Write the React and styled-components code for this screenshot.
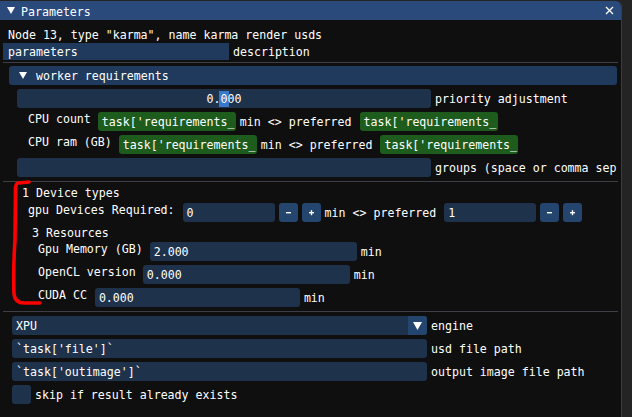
import React from "react";
import styled, { createGlobalStyle } from "styled-components";

// --- Global ---
const GlobalStyle = createGlobalStyle`
  html, body {
    margin: 0;
    padding: 0;
    background: #242424;
  }
  body {
    font-family: "DejaVu Sans Mono", "Liberation Mono", monospace;
    font-size: 11.6px;
    color: #ffffff;
  }
`;

// --- Window chrome ---
const Screen = styled.div`
  width: 632px;
  height: 417px;
  overflow: hidden;
  background: #242424;
  padding-top: 1px;
  box-sizing: border-box;
`;

const Window = styled.div`
  position: relative;
  width: 621px;
  height: 416px;
  background: #0f0f0f;
  border-right: 1px solid #3b3b44;
  border-top-right-radius: 5px;
  overflow: hidden;
  display: flex;
  flex-direction: column;
`;

const TitleBar = styled.div`
  height: 19px;
  flex: none;
  background: #294a7a;
  display: flex;
  align-items: center;
  padding: 0 7px;
  border-top-right-radius: 5px;
`;

const TitleText = styled.span`
  margin-left: 6px;
  line-height: 17px;
  height: 13px;
  flex: 1;
`;

const Body = styled.div`
  display: flex;
  flex-direction: column;
`;

// --- Widgets ---
// line-height sits 2px over the box height so the glyphs drop 1px, like the bitmap font
const TextLine = styled.div`
  line-height: 15px;
  height: 13px;
  white-space: nowrap;
  margin-left: ${(p) => p.$x}px;
  margin-top: ${(p) => p.$mt ?? 4}px;
`;

const TableHead = styled.div`
  display: flex;
  margin-top: 2px;
  margin-left: 3px;
  height: 17px;
  line-height: 19px;
`;

const HeadCell = styled.div`
  width: 221px;
  height: 17px;
  padding-left: 5px;
  background: #1f3a5c;
`;

const HeadLabel = styled.div`
  margin-left: 4px;
`;

const Separator = styled.div`
  height: 1px;
  width: 615px;
  margin-left: 3px;
  margin-top: ${(p) => p.$mt ?? 4}px;
  background: #3e3e47;
`;

const Header = styled.div`
  margin: 3px 0 0 9px;
  width: 608px;
  height: 19px;
  border-radius: 3px;
  background: #1f3a5c;
  display: flex;
  align-items: center;
  padding-left: 10px;
  box-sizing: border-box;
`;

const HeaderText = styled.span`
  margin-left: 9px;
  line-height: 15px;
  height: 13px;
`;

const Row = styled.div`
  display: flex;
  align-items: flex-start;
  gap: 4px;
  margin-left: ${(p) => p.$x}px;
  margin-top: ${(p) => p.$mt ?? 4}px;
  height: 19px;
  white-space: nowrap;
`;

const SideLabel = styled.div`
  line-height: 15px;
  height: 13px;
  margin-right: ${(p) => p.$mr ?? 3}px;
`;

const InlineLabel = styled.div`
  line-height: 21px;
  height: 19px;
  margin-right: ${(p) => p.$mr ?? 0}px;
`;

const Frame = styled.div`
  flex: none;
  width: ${(p) => p.$w}px;
  height: 19px;
  line-height: 21px;
  box-sizing: border-box;
  padding: 0 4px;
  border-radius: 3px;
  overflow: hidden;
  white-space: nowrap;
  background: ${(p) => (p.$tone === "green" ? "#1d5c1d" : "#1f324c")};
  text-align: ${(p) => (p.$center ? "center" : "left")};
`;

const Selected = styled.span`
  background: #3a78cc;
  display: inline-block;
  line-height: 16px;
  padding: 0 2px;
  margin: 0 -2px;
`;

const SmallButton = styled.div`
  flex: none;
  width: 19px;
  height: 19px;
  border-radius: 3px;
  background: #24456d;
  display: flex;
  align-items: center;
  justify-content: center;
`;

const Combo = styled.div`
  flex: none;
  width: ${(p) => p.$w}px;
  height: 19px;
  border-radius: 3px;
  background: #1f324c;
  display: flex;
  overflow: hidden;
`;

const ComboValue = styled.div`
  flex: 1;
  padding-left: 4px;
  line-height: 21px;
`;

const ComboArrow = styled.div`
  width: 19px;
  height: 19px;
  background: #24456d;
  display: flex;
  align-items: center;
  justify-content: center;
`;

const Checkbox = styled.div`
  width: 19px;
  height: 19px;
  border-radius: 3px;
  background: #1f324c;
`;

const Marker = styled.svg`
  position: absolute;
  left: 0;
  top: -1px;
  pointer-events: none;
`;

// --- Icons ---
const DownArrow = ({ size = 8 }) => (
  <svg width={size} height={size - 1} viewBox="0 0 8 7">
    <polygon points="0,0 8,0 4,7" fill="#ffffff" />
  </svg>
);

const CloseX = () => (
  <svg width="9" height="9" viewBox="0 0 9 9">
    <path d="M1 1 L8 8 M8 1 L1 8" stroke="#ffffff" strokeWidth="1.3" />
  </svg>
);

const Minus = () => (
  <svg width="7" height="7" viewBox="0 0 7 7">
    <rect x="1" y="3" width="5" height="1.4" fill="#fff" />
  </svg>
);

const Plus = () => (
  <svg width="7" height="7" viewBox="0 0 7 7">
    <rect x="1" y="3" width="5" height="1.4" fill="#fff" />
    <rect x="2.8" y="1.2" width="1.4" height="5" fill="#fff" />
  </svg>
);

const TASK_REQ = "task['requirements_";

export default function App() {
  return (
    <Screen>
      <GlobalStyle />
      <Window>
        <TitleBar>
          <DownArrow />
          <TitleText>Parameters</TitleText>
          <CloseX />
        </TitleBar>
        <Body>
          <TextLine $x={8} $mt={8}>
            Node 13, type "karma", name karma render usds
          </TextLine>
          <TableHead>
            <HeadCell>parameters</HeadCell>
            <HeadLabel>description</HeadLabel>
          </TableHead>
          <Separator $mt={2} />

          <Header>
            <DownArrow />
            <HeaderText>worker requirements</HeaderText>
          </Header>
          <Row $x={17}>
            <Frame $w={414} $center>
              0.<Selected>0</Selected>00
            </Frame>
            <InlineLabel>priority adjustment</InlineLabel>
          </Row>
          <Row $x={28}>
            <SideLabel>CPU count</SideLabel>
            <Frame $w={138} $tone="green">{TASK_REQ}</Frame>
            <InlineLabel $mr={4}>min &lt;&gt; preferred</InlineLabel>
            <Frame $w={138} $tone="green">{TASK_REQ}</Frame>
          </Row>
          <Row $x={28}>
            <SideLabel>CPU ram (GB)</SideLabel>
            <Frame $w={138} $tone="green">{TASK_REQ}</Frame>
            <InlineLabel $mr={4}>min &lt;&gt; preferred</InlineLabel>
            <Frame $w={138} $tone="green">{TASK_REQ}</Frame>
          </Row>
          <Row $x={17}>
            <Frame $w={414} />
            <InlineLabel>groups (space or comma sep</InlineLabel>
          </Row>
          <Separator />

          <TextLine $x={22}>1 Device types</TextLine>
          <Row $x={28}>
            <SideLabel $mr={4}>gpu Devices Required:</SideLabel>
            <Frame $w={92}>0</Frame>
            <SmallButton><Minus /></SmallButton>
            <SmallButton><Plus /></SmallButton>
            <InlineLabel $mr={4}>min &lt;&gt; preferred</InlineLabel>
            <Frame $w={92}>1</Frame>
            <SmallButton><Minus /></SmallButton>
            <SmallButton><Plus /></SmallButton>
          </Row>
          <TextLine $x={32}>3 Resources</TextLine>
          <Row $x={38} $mt={3}>
            <SideLabel>Gpu Memory (GB)</SideLabel>
            <Frame $w={207}>2.000</Frame>
            <InlineLabel>min</InlineLabel>
          </Row>
          <Row $x={38}>
            <SideLabel>OpenCL version</SideLabel>
            <Frame $w={207}>0.000</Frame>
            <InlineLabel>min</InlineLabel>
          </Row>
          <Row $x={38}>
            <SideLabel $mr={4}>CUDA CC</SideLabel>
            <Frame $w={205}>0.000</Frame>
            <InlineLabel>min</InlineLabel>
          </Row>
          <Separator />

          <Row $x={12}>
            <Combo $w={415}>
              <ComboValue>XPU</ComboValue>
              <ComboArrow><DownArrow size={9} /></ComboArrow>
            </Combo>
            <InlineLabel>engine</InlineLabel>
          </Row>
          <Row $x={12}>
            <Frame $w={415}>`task['file']`</Frame>
            <InlineLabel>usd file path</InlineLabel>
          </Row>
          <Row $x={12}>
            <Frame $w={415}>`task['outimage']`</Frame>
            <InlineLabel>output image file path</InlineLabel>
          </Row>
          <Row $x={12}>
            <Checkbox />
            <InlineLabel>skip if result already exists</InlineLabel>
          </Row>
        </Body>

        <Marker width="60" height="320" viewBox="0 0 60 320">
          <path
            d="M29 182 L18 183 Q15 184 15.5 192 L15 240 Q13 270 14 294 Q15 303 24 303 L40 303"
            fill="none"
            stroke="#ff0000"
            strokeWidth="3.6"
            strokeLinecap="round"
            strokeLinejoin="round"
          />
        </Marker>
      </Window>
    </Screen>
  );
}
